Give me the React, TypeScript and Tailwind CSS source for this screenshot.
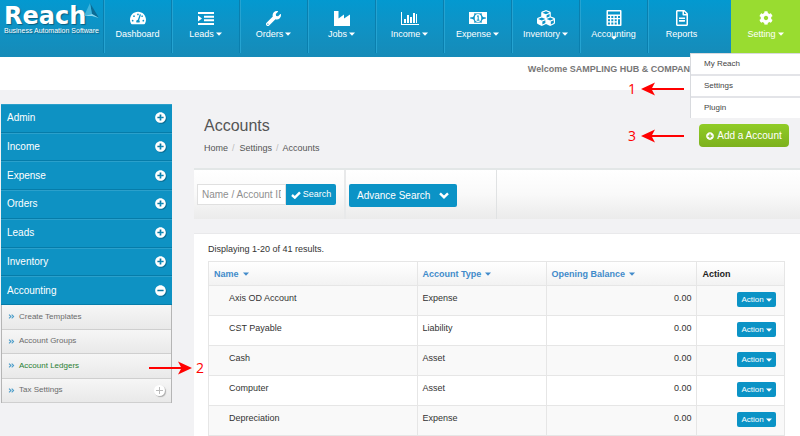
import React, { useState } from "react";
import {
  FaAngleDoubleRight,
  FaCog,
  FaCubes,
  FaMinusCircle,
  FaPlusCircle,
  FaRegFileAlt,
  FaTachometerAlt,
  FaWrench,
} from "react-icons/fa";

const Caret = ({ className = "" }: { className?: string }) => (
  <svg viewBox="0 0 6 4" className={`h-1 w-1.5 ${className}`} fill="currentColor">
    <path d="M0 0.500h6L3 3.700z" />
  </svg>
);

const CheckIcon = () => (
  <svg viewBox="0 0 10 8" className="h-2 w-2.5" fill="none" stroke="currentColor" strokeWidth="2.400">
    <path d="M1 4l2.800 2.600L9 1.300" />
  </svg>
);

const ChevronIcon = () => (
  <svg viewBox="0 0 10 7" className="h-[7px] w-2.5" fill="none" stroke="currentColor" strokeWidth="2.400">
    <path d="M1 1.300L5 5.200 9 1.300" />
  </svg>
);

const IndentIcon = () => (
  <svg viewBox="0 0 16 13" className="h-[13px] w-4" fill="currentColor">
    <path d="M0 0h16v2H0zM6 3.700h10v2H6zM6 7.300h10v2H6zM0 11h16v2H0zM0 3.500l4 3-4 3z" />
  </svg>
);

const FactoryIcon = () => (
  <svg viewBox="0 0 16 15" className="h-[15px] w-4" fill="currentColor">
    <path d="M0 0h4.500v7.500l5.500-4v4l6-4V15H0z" />
  </svg>
);

const ChartIcon = () => (
  <svg viewBox="0 0 18 14" className="h-3.5 w-[18px]" fill="currentColor">
    <path d="M0 1h1v12h17v1H0zM3 8h2v4H3zM6 4h2v8H6zM9 6h2v6H9zM12 2h2v10h-2zM15 3h1v9h-1z" />
  </svg>
);

const MoneyIcon = () => (
  <svg viewBox="0 0 18 12" className="h-3 w-[18px]">
    <rect x="0.7" y="0.7" width="16.6" height="10.6" fill="none" stroke="currentColor" strokeWidth="1.4" />
    <path d="M1 1h4a3 3 0 0 1-4 4zM17 1h-4a3 3 0 0 0 4 4zM1 11h4a3 3 0 0 0-4-4zM17 11h-4a3 3 0 0 1 4-4z" fill="currentColor" />
    <ellipse cx="9" cy="6" rx="3.300" ry="3.900" fill="currentColor" />
    <path d="M8 4.500L9.200 3.600V8M7.700 8.200h2.800" fill="none" stroke="#0994c6" strokeWidth="1" />
  </svg>
);

const CalculatorIcon = () => (
  <svg viewBox="0 0 16 16" className="h-4 w-4" fill="currentColor">
    <path
      fillRule="evenodd"
      d="M1.500 0h13a1 1 0 0 1 1 1v14a1 1 0 0 1-1 1h-13a1 1 0 0 1-1-1V1a1 1 0 0 1 1-1zM2 1.500v3h12v-3zM2 6v2h2V6zm3.300 0v2h2V6zm3.400 0v2h2V6zM12 6v2h2V6zM2 9.300v2h2v-2zm3.300 0v2h2v-2zm3.400 0v2h2v-2zM2 12.500v2h2v-2zm3.300 0v2h2v-2zm3.400 0v2h2v-2zM12 9.300v5.200h2V9.300z"
    />
  </svg>
);

interface NavItem {
  label: string;
  icon: React.ReactNode;
  caret?: boolean;
}

const navItems: NavItem[] = [
  { label: "Dashboard", icon: <FaTachometerAlt className="size-4" /> },
  { label: "Leads", icon: <IndentIcon />, caret: true },
  { label: "Orders", icon: <FaWrench className="size-[15px]" />, caret: true },
  { label: "Jobs", icon: <FactoryIcon />, caret: true },
  { label: "Income", icon: <ChartIcon />, caret: true },
  { label: "Expense", icon: <MoneyIcon />, caret: true },
  { label: "Inventory", icon: <FaCubes className="size-[18px]" />, caret: true },
  { label: "Accounting", icon: <CalculatorIcon /> },
  { label: "Reports", icon: <FaRegFileAlt className="size-4" /> },
];

const sections = ["Admin", "Income", "Expense", "Orders", "Leads", "Inventory", "Accounting"];

const subItems = ["Create Templates", "Account Groups", "Account Ledgers", "Tax Settings"];

const accounts = [
  { name: "Axis OD Account", type: "Expense", balance: "0.00" },
  { name: "CST Payable", type: "Liability", balance: "0.00" },
  { name: "Cash", type: "Asset", balance: "0.00" },
  { name: "Computer", type: "Asset", balance: "0.00" },
  { name: "Depreciation", type: "Expense", balance: "0.00" },
];

const Logo = () => (
  <a href="#" className="relative block w-[103px] shrink-0 pl-1 pt-1.5 text-white">
    <span className="block font-['DejaVu_Sans'] text-[24px] font-bold leading-5 [text-shadow:1px_1px_1px_#0b5f80]">
      Reach
    </span>
    <span className="block whitespace-nowrap text-[7px] leading-[10px] [text-shadow:1px_1px_1px_#0b5f80]">
      Business Automation Software
    </span>
    <svg viewBox="0 0 16 16" className="absolute left-[84px] top-[3px] size-4">
      <path d="M6 0L15 15 8 11z" fill="#0c6c95" />
      <path d="M6 0L8 11 0 13z" fill="#3fb4dc" />
      <path d="M0 13l8-2 7 4-7-2z" fill="#8ad7ef" />
    </svg>
  </a>
);

const Header = () => {
  const [open, setOpen] = useState(true);

  return (
    <header className="relative flex h-[57px] bg-linear-to-b from-[#0399d0] to-[#168bb8] text-white">
      <Logo />
      <nav className="flex flex-1">
        {navItems.map((item) => (
          <a
            key={item.label}
            href="#"
            className="relative flex h-[53px] w-[68px] flex-col items-center border-l border-[#0a7fae] pt-2.5 shadow-[inset_1px_0_0_#25a3d1]"
          >
            <span className="flex h-4 items-center">{item.icon}</span>
            <span className="mt-0.5 flex items-center text-[9px] font-medium leading-3">
              {item.label}
              {item.caret && <Caret className="ml-0.5" />}
            </span>
            {item.label === "Accounting" && <Caret className="absolute left-[31px] top-9" />}
          </a>
        ))}
        <button
          className="ml-auto flex h-[53px] w-[69px] flex-col items-center bg-[#99dc30] pt-2.5"
          onClick={() => setOpen(!open)}
        >
          <span className="flex h-4 items-center">
            <FaCog className="size-3.5" />
          </span>
          <span className="mt-0.5 flex items-center text-[9px] font-medium leading-3">
            Setting
            <Caret className="ml-0.5" />
          </span>
        </button>
      </nav>
      {open && (
        <ul className="absolute right-0 top-[53px] z-10 w-[110px] divide-y-2 divide-[#e3e4e8] border-l border-t border-[#d8dade] bg-white text-[8px] text-[#444]">
          {["My Reach", "Settings", "Plugin"].map((label) => (
            <li key={label}>
              <a href="#" className="block py-1 pl-[13px] leading-3">
                {label}
              </a>
            </li>
          ))}
        </ul>
      )}
    </header>
  );
};

const Sidebar = () => (
  <aside className="ml-px mt-3.5 w-[171px] shrink-0 self-start">
    <ul className="grid min-h-[201px] auto-rows-fr bg-[#0e92c3] text-[10px] text-white">
      {sections.map((label) => (
        <li key={label} className="flex border-b border-[#067ca9] shadow-[inset_0_1px_0_#2ba0cb]">
          <button className="flex flex-1 items-center justify-between px-1.5 text-left">
            {label}
            {label === "Accounting" ? (
              <FaMinusCircle className="size-[11px] drop-shadow-[1px_1px_0_#0b6f96]" />
            ) : (
              <FaPlusCircle className="size-[11px] drop-shadow-[1px_1px_0_#0b6f96]" />
            )}
          </button>
        </li>
      ))}
    </ul>
    <ul className="grid min-h-[98px] auto-rows-fr border-x border-[#b5b5b5] text-[8px] text-[#6b6b6b]">
      {subItems.map((label) => (
        <li
          key={label}
          className="flex items-center justify-between border-b border-[#cfcfcf] bg-linear-to-b from-[#f6f6f6] to-[#e9e9e9] pr-1.5"
        >
          <a href="#" className="flex items-center">
            <FaAngleDoubleRight className="ml-1.5 mr-1 size-[7px] text-[#4a9cc9]" />
            <span className={label === "Account Ledgers" ? "text-[#2a8033]" : ""}>{label}</span>
          </a>
          {label === "Tax Settings" && (
            <span className="flex size-[11px] items-center justify-center rounded-full bg-white text-[#bbb] shadow-[1px_1px_1px_#aaa]">
              <svg viewBox="0 0 7 7" className="size-[7px]" stroke="currentColor">
                <path d="M3.500 0v7M0 3.500h7" />
              </svg>
            </span>
          )}
        </li>
      ))}
    </ul>
  </aside>
);

const PageHeading = () => (
  <div className="flex items-start justify-between pb-3.5 pl-2.5 pr-[11px] pt-[26px]">
    <div>
      <h1 className="text-base leading-5 text-[#555]">Accounts</h1>
      <ol className="mt-1.5 flex text-[9px] leading-3 text-[#555]">
        <li>
          <a href="#">Home</a>
          <span className="mx-1 text-[#bbb]">/</span>
        </li>
        <li className="ml-px">
          <a href="#">Settings</a>
          <span className="mx-1 text-[#bbb]">/</span>
        </li>
        <li>Accounts</li>
      </ol>
    </div>
    <button className="mt-2 flex h-[23px] w-[90px] items-center justify-center gap-[3px] rounded-sm bg-linear-to-b from-[#90cc26] to-[#7db11d] text-[10px] text-white">
      <FaPlusCircle className="size-2" />
      Add a Account
    </button>
  </div>
);

const Toolbar = () => (
  <div className="flex border-t-2 border-[#e3e7e7] bg-linear-to-b from-white via-[#f9f9f9] to-[#ebebeb]">
    <form className="flex items-start border-r-2 border-[#e8e9ea] py-3.5 pl-[3px] pr-2" onSubmit={(e) => e.preventDefault()}>
      <input
        type="text"
        aria-label="Name / Account ID"
        placeholder="Name / Account ID"
        className="h-[21px] w-[89px] border border-[#e0e0e0] bg-white px-1 text-[10px] placeholder:text-[#8f8f8f]"
      />
      <button className="flex h-[21px] w-[50px] items-center justify-center gap-0.5 rounded-r-xs bg-[#0b93c6] text-[9px] text-white">
        <CheckIcon />
        Search
      </button>
    </form>
    <div className="w-[151px] border-r border-[#e0e2e3] pb-3 pl-[3px] pt-3.5">
      <button className="flex h-[23px] w-[108px] items-center justify-between rounded-xs bg-[#0b93c6] px-2 text-[10px] text-white">
        Advance Search
        <ChevronIcon />
      </button>
    </div>
  </div>
);

const AccountsTable = () => (
  <table className="w-full table-fixed border-collapse text-left text-[9px] leading-3 text-[#333]">
    <colgroup>
      <col className="w-[36.2%]" />
      <col className="w-[22.4%]" />
      <col className="w-[26.2%]" />
      <col className="w-[15.2%]" />
    </colgroup>
    <thead>
      <tr className="h-6 bg-linear-to-b from-white to-[#f2f2f2]">
        {["Name", "Account Type", "Opening Balance"].map((label) => (
          <th key={label} className="border border-[#e6e6e6] px-[5px] font-bold text-[#428bca]">
            <a href="#" className="flex items-center">
              {label}
              <Caret className="ml-1" />
            </a>
          </th>
        ))}
        <th className="border border-[#e6e6e6] px-[5px] font-bold text-[#222]">Action</th>
      </tr>
    </thead>
    <tbody>
      {accounts.map((account) => (
        <tr key={account.name} className="h-[30px] align-top odd:bg-[#f9f9f9]">
          <td className="border border-[#e6e6e6] pl-5 pt-1.5">{account.name}</td>
          <td className="border border-[#e6e6e6] pl-[5px] pt-1.5">{account.type}</td>
          <td className="border border-[#e6e6e6] pr-[5px] pt-1.5 text-right">{account.balance}</td>
          <td className="border border-[#e6e6e6] pr-2 pt-1.5">
            <button className="ml-auto flex h-[15px] w-[39px] items-center justify-center gap-0.5 rounded-xs bg-[#0b93c6] text-[8px] text-white">
              Action
              <Caret />
            </button>
          </td>
        </tr>
      ))}
    </tbody>
  </table>
);

interface StepMarkProps {
  step: number;
  className: string;
  pointsRight?: boolean;
}

// Numbered arrows laid over the page for the walkthrough
const StepMark: React.FC<StepMarkProps> = ({ step, className, pointsRight }) => (
  <div
    className={`absolute z-20 flex items-center font-['Open_Sans'] text-sm leading-4 text-[#f00] ${
      pointsRight ? "flex-row-reverse gap-1" : "gap-[5px]"
    } ${className}`}
  >
    <span>{step}</span>
    <svg viewBox="0 0 44 14" className={`h-3.5 w-11 ${pointsRight ? "rotate-180" : ""}`}>
      <path d="M0 7L14 0.500 10.500 7 14 13.500zM10 6h33v2H10z" fill="currentColor" />
    </svg>
  </div>
);

export default function App() {
  return (
    <div className="relative flex min-h-screen flex-col overflow-hidden bg-[#f2f2f4] font-['Liberation_Sans',Arial,sans-serif]">
      <Header />
      <div className="flex h-[33px] items-start justify-end bg-white pr-[104px] pt-1.5 text-[9px] font-bold leading-3 text-[#777]">
        Welcome SAMPLING HUB &amp; COMPANY
      </div>
      <div className="flex flex-1">
        <Sidebar />
        <main className="ml-[22px] flex min-w-0 flex-1 flex-col">
          <PageHeading />
          <Toolbar />
          <section className="mt-3.5 flex-1 border-t border-[#e9e9eb] bg-white pl-3.5 pr-[15px] pt-[9px]">
            <p className="mb-1.5 text-[9px] leading-3 text-[#333]">Displaying 1-20 of 41 results.</p>
            <AccountsTable />
          </section>
        </main>
      </div>
      <StepMark step={1} className="right-[115px] top-[81px]" />
      <StepMark step={3} className="right-[115px] top-32" />
      <StepMark step={2} className="left-[148px] top-[360px]" pointsRight />
    </div>
  );
}
